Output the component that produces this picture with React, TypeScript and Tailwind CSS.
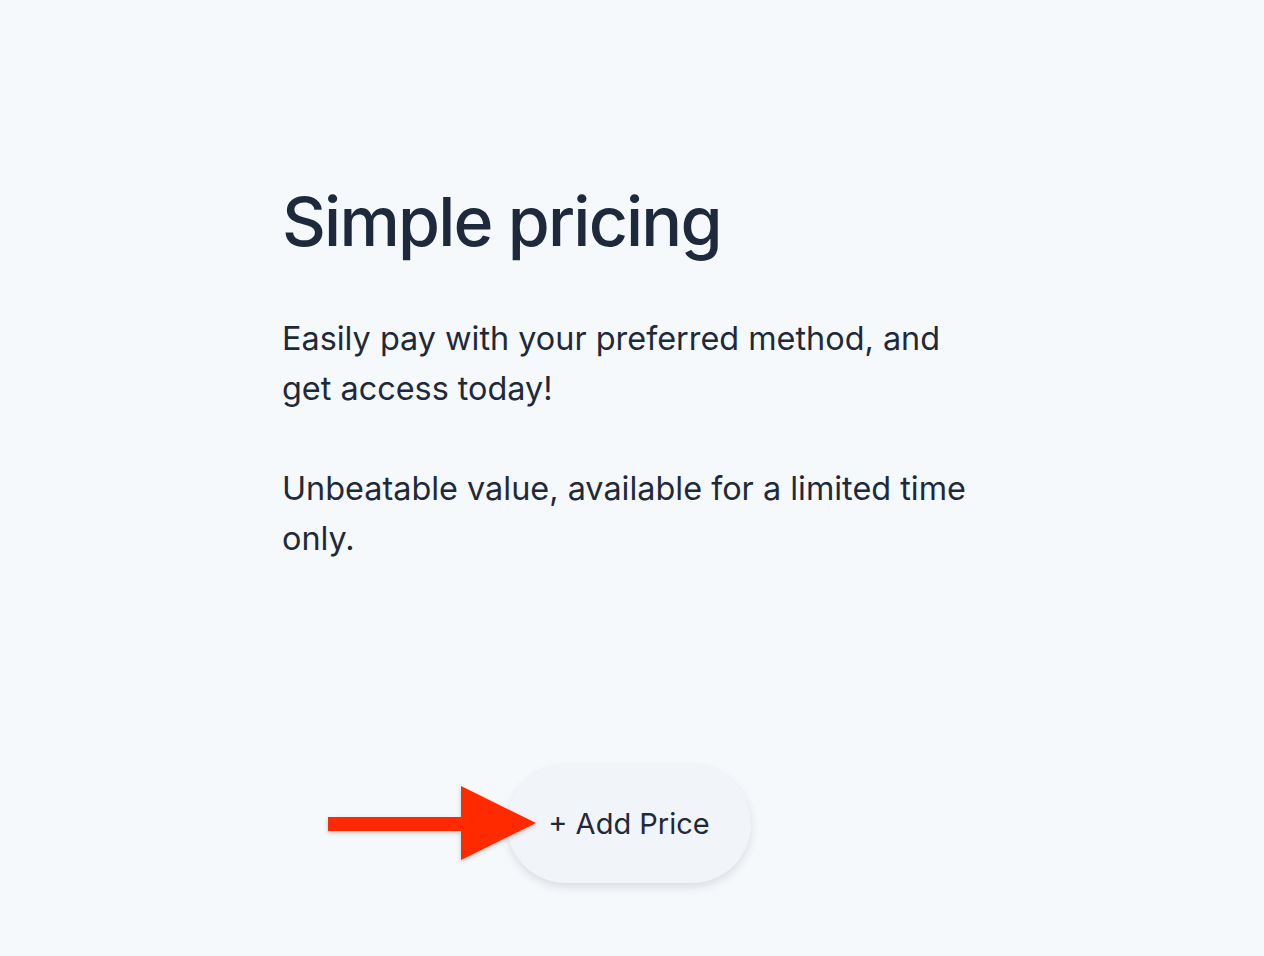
export default function App() {
  return (
    <div
      className="min-h-screen w-full bg-[#f6f9fc] text-[#1e293b]"
      style={{ fontFamily: 'Inter, "Noto Sans", sans-serif' }}
    >
      <div className="mx-auto max-w-[700px] pt-[171px]">
        <h1 className="text-[68px] font-medium leading-[100px] tracking-[-0.027em]">Simple pricing</h1>
        <div className="mt-[43px] text-[32.4px] leading-[50px]">
          <p>Easily pay with your preferred method, and get access today!</p>
          <p className="mt-[50px]">Unbeatable value, available for a limited time only.</p>
        </div>
      </div>

      <div className="mt-[201px] flex justify-center">
        <div className="relative mr-[6px]">
          {/* pointer arrow */}
          <svg
            className="absolute right-full top-1/2 -mr-[31px] -translate-y-1/2 drop-shadow-[0_2px_2px_rgba(0,0,0,0.2)]"
            width="210"
            height="76"
            viewBox="0 0 210 76"
          >
            <rect x="0" y="31" width="136" height="14" fill="#ff2a00" />
            <polygon points="133,0 208,37 133,74" fill="#ff2a00" />
          </svg>
          <button
            type="button"
            className="h-[118px] rounded-full bg-[#f1f4f8] px-[41px] text-[29px] text-[#1e293b] shadow-[0_4px_10px_rgba(15,23,42,0.12)]"
          >
            + Add Price
          </button>
        </div>
      </div>
    </div>
  )
}
